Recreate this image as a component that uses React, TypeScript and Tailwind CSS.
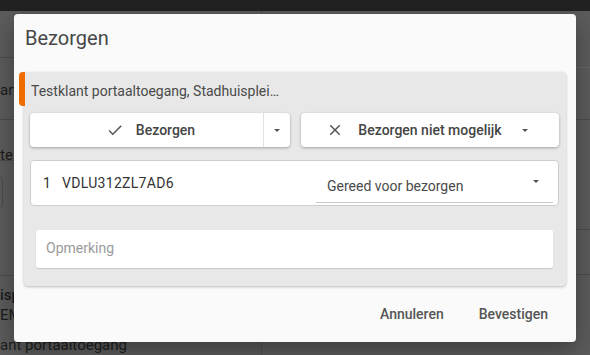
import React from 'react'

const font = { fontFamily: 'Roboto, "Noto Sans", Arial, sans-serif' }

function CheckIcon() {
  return (
    <svg width="18" height="18" viewBox="0 0 24 24" className="fill-[#555]">
      <path d="M9 16.17L4.83 12l-1.42 1.41L9 19 21 7l-1.41-1.41z" />
    </svg>
  )
}

function CloseIcon() {
  return (
    <svg width="18" height="18" viewBox="0 0 24 24" className="fill-[#555]">
      <path d="M19 6.41L17.59 5 12 10.59 6.41 5 5 6.41 10.59 12 5 17.59 6.41 19 12 13.41 17.59 19 19 17.59 13.41 12z" />
    </svg>
  )
}

function Caret() {
  return (
    <svg width="18" height="18" viewBox="0 0 24 24" className="fill-[#555]">
      <path d="M8 10.5l4 4 4-4z" />
    </svg>
  )
}

// the page behind the dimmed overlay; only its left and right edges show
function Backdrop() {
  return (
    <div className="flex flex-col h-full">
      <div className="h-[13px] bg-[#222]" />
      <div className="flex flex-1 text-[#1c1c1c] text-[15px]">
        <div className="w-[262px] border-r border-[#4f4f4f] flex flex-col">
          <div className="h-[47px] border-b border-[#4c4c4c]" />
          <div className="h-[62px] border-b border-[#4c4c4c] flex items-center pt-[4px]">an</div>
          <div className="h-[41px] border-b border-[#4c4c4c] pt-[26px] leading-[18px]">te</div>
          <div className="h-[115px] border-b border-[#4c4c4c] pt-[16px]">
            <div className="ml-[-40px] w-[43px] h-[32px] border border-[#4a4a4a] rounded" />
          </div>
          <div className="flex flex-col pt-[9px] leading-[20px]">
            <span className="font-medium">isp</span>
            <span>EM</span>
            <span className="mt-[10px]">ant portaaltoegang</span>
          </div>
        </div>
        <div className="flex-1 flex flex-col">
          <div className="h-[57px] border-b border-[#666]" />
          <div className="h-[52px] border-b border-[#4c4c4c]" />
          <div className="h-[110px] border-b border-[#4c4c4c]" />
          <div className="h-[45px] border-b border-[#4c4c4c]" />
        </div>
      </div>
    </div>
  )
}

export default function App() {
  return (
    <div className="relative w-[590px] h-[355px] overflow-hidden bg-[#5c5c5c]" style={font}>
      <Backdrop />

      <div className="absolute left-[14px] top-[14px] w-[562px] h-[328px] bg-[#fafafa] rounded-[4px] shadow-[0_8px_24px_rgba(0,0,0,0.35)] flex flex-col">
        <div className="pt-[10px] px-[11px] text-[20px] leading-[28px] text-[#474747]">Bezorgen</div>

        <div className="relative mt-[20px] mx-[10px] bg-[#e8e8e8] rounded-[4px] shadow-[0_1px_3px_rgba(0,0,0,0.25)] pl-[6px] pr-[7px] pb-[18px]">
          <div className="absolute left-[-5px] top-0 w-[6px] h-[34px] bg-[#ef6c00] rounded-l-[4px]" />
          <div className="pt-[9px] text-[14px] leading-[20px] text-[#4a4a4a] pl-[1px]">
            Testklant portaaltoegang, Stadhuisplei…
          </div>

          <div className="mt-[12px] flex gap-[11px] h-[34px]">
            <div className="w-[260px] flex bg-white rounded-[4px] shadow-[0_1px_3px_rgba(0,0,0,0.3)]">
              <div className="flex-1 flex items-center justify-center gap-[12px] pl-[8px] text-[14px] font-medium text-[#454545]">
                <CheckIcon />
                <span>Bezorgen</span>
              </div>
              <div className="w-[27px] border-l border-[#e2e2e2] flex items-center justify-center">
                <Caret />
              </div>
            </div>
            <div className="flex-1 flex items-center justify-center bg-white rounded-[4px] shadow-[0_1px_3px_rgba(0,0,0,0.3)] text-[14px] font-medium text-[#454545]">
              <CloseIcon />
              <span className="ml-[14px]">Bezorgen niet mogelijk</span>
              <span className="ml-[14px]"><Caret /></span>
            </div>
          </div>

          <div className="mt-[13px] h-[46px] bg-white border border-[#cdcdcd] rounded-[4px] flex items-center pl-[12px] pr-[5px] text-[14px] text-[#333]">
            <span className="w-[19px]">1</span>
            <span className="tracking-[0.3px]">VDLU312ZL7AD6</span>
            <div className="ml-auto self-start mt-[3px] w-[237px] h-[39px] border-b border-[#c8c8c8] flex items-center pl-[11px] pr-[8px] pt-[6px]">
              <span className="text-[#4a4a4a]">Gereed voor bezorgen</span>
              <span className="ml-auto mb-[10px]"><Caret /></span>
            </div>
          </div>

          <div className="mt-[24px] mx-[6px] h-[38px] bg-white rounded-[2px] shadow-[0_1px_1px_rgba(0,0,0,0.15)] flex items-center pl-[10px] text-[14px] text-[#9a9a9a] pb-[2px]">
            Opmerking
          </div>
        </div>

        <div className="mt-[10px] flex justify-end gap-[19px] pr-[20px]">
          <button className="h-[36px] px-[8px] text-[14px] font-medium text-[#555]">Annuleren</button>
          <button className="h-[36px] px-[8px] text-[14px] font-medium text-[#555]">Bevestigen</button>
        </div>
      </div>
    </div>
  )
}
